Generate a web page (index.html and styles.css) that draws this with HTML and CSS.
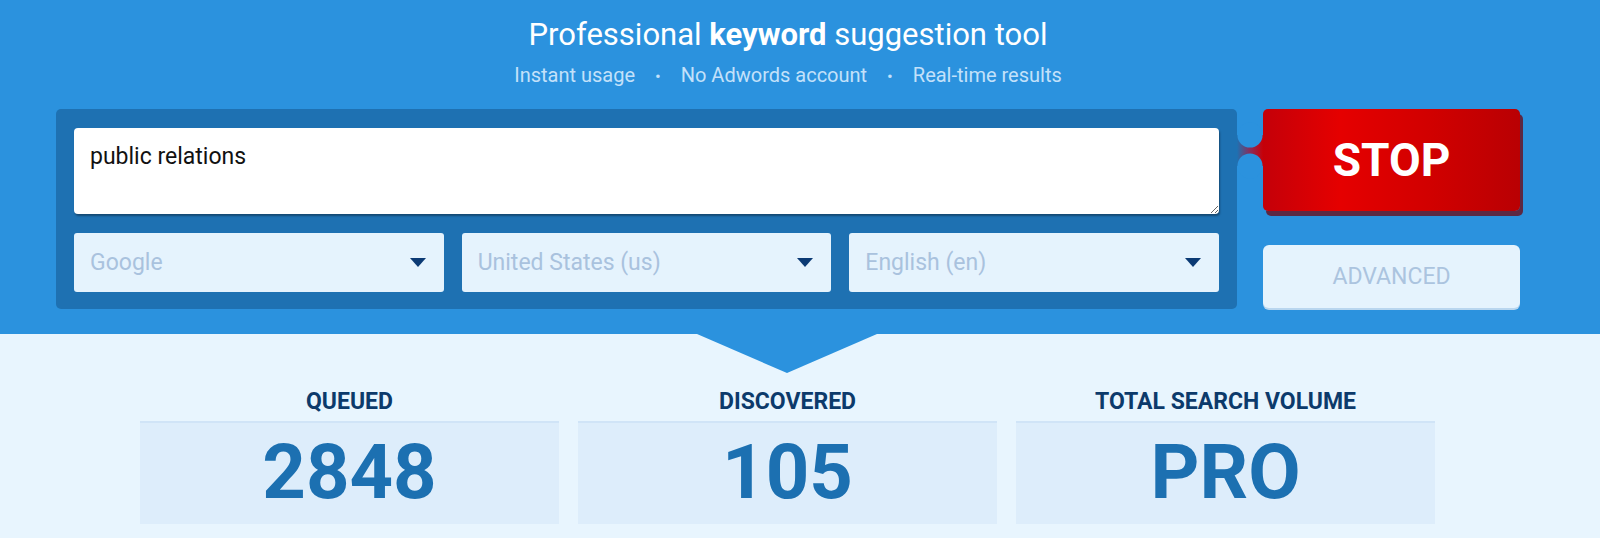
FILE: index.html
```
<!DOCTYPE html>
<html>
    <head>
        <title>Keyword Tool</title>
        <link rel="stylesheet" href="styles.css">
    </head>
    <body>
        <div id="top">
            <div class="wrap">
                <div class="intro">
                    <h1>Professional <b>keyword</b> suggestion tool</h1>
                    <p class="perks">
                        <span>Instant usage</span>
                        <span class="dot">&bull;</span>
                        <span>No Adwords account</span>
                        <span class="dot">&bull;</span>
                        <span>Real-time results</span>
                    </p>
                </div>

                <div class="search_row">
                    <!-- query box + the three pickers -->
                    <div class="search_panel">
                        <textarea id="query">public relations</textarea>
                        <div class="pickers">
                            <div class="picker">
                                <span>Google</span>
                                <svg width="16" height="9" viewBox="0 0 16 9"><path d="M0 0 H16 L8 9 Z" fill="#0b3a74"/></svg>
                            </div>
                            <div class="picker">
                                <span>United States (us)</span>
                                <svg width="16" height="9" viewBox="0 0 16 9"><path d="M0 0 H16 L8 9 Z" fill="#0b3a74"/></svg>
                            </div>
                            <div class="picker">
                                <span>English (en)</span>
                                <svg width="16" height="9" viewBox="0 0 16 9"><path d="M0 0 H16 L8 9 Z" fill="#0b3a74"/></svg>
                            </div>
                        </div>
                    </div>

                    <!-- little neck joining the panel to the button -->
                    <svg class="neck" width="26" height="82" viewBox="0 0 26 82">
                        <defs>
                            <linearGradient id="neck_fade" x1="0" x2="1" y1="0" y2="0">
                                <stop offset="0" stop-color="#1e71b2"/>
                                <stop offset="0.5" stop-color="#8a2c5a"/>
                                <stop offset="1" stop-color="#c70008"/>
                            </linearGradient>
                        </defs>
                        <rect x="0" y="26" width="26" height="31" fill="url(#neck_fade)"/>
                        <circle cx="13" cy="26" r="12.6" fill="#2b92de"/>
                        <circle cx="13" cy="57" r="12.6" fill="#2b92de"/>
                    </svg>

                    <div class="actions">
                        <button id="button_stop">STOP</button>
                        <button id="button_advanced">ADVANCED</button>
                    </div>
                </div>
            </div>
        </div>

        <div id="stats">
            <div class="wrap">
                <div class="stat_grid">
                    <div class="stat">
                        <h2>QUEUED</h2>
                        <div class="stat_value">2848</div>
                    </div>
                    <div class="stat">
                        <h2>DISCOVERED</h2>
                        <div class="stat_value">105</div>
                    </div>
                    <div class="stat">
                        <h2>TOTAL SEARCH VOLUME</h2>
                        <div class="stat_value">PRO</div>
                    </div>
                </div>
            </div>
        </div>
    </body>
</html>
```
FILE: styles.css
```
body {
    margin: 0;
    font-family: Roboto, "Liberation Sans", sans-serif;
    background-color: #e8f5fe;
}
.wrap {
    width: 1467px;
    margin-left: 56px;
}

#top {
    background-color: #2b92de;
    padding: 17px 0 25px;
    position: relative;
}
/* arrow pointing down at the counters */
#top::after {
    content: "";
    position: absolute;
    left: 697px;
    bottom: -39px;
    border-left: 90px solid transparent;
    border-right: 90px solid transparent;
    border-top: 39px solid #2b92de;
}

.intro {
    padding-right: 3px;
    text-align: center;
    color: #fff;
}
.intro h1 {
    margin: 0;
    font-size: 31px;
    font-weight: 400;
    line-height: 36px;
}
.intro b {
    font-weight: 700;
}
.perks {
    margin: 10px 0 0;
    font-size: 20px;
    line-height: 24px;
    color: #c3e1fa;
}
.perks .dot {
    margin: 0 15px;
    font-size: 17px;
}

.search_row {
    display: flex;
    align-items: flex-start;
    margin-top: 21px;
}
.search_panel {
    box-sizing: border-box;
    width: 1181px;
    padding: 19px 18px 17px;
    background-color: #1e71b2;
    border-radius: 5px;
    display: flex;
    flex-direction: column;
    gap: 19px;
}
#query {
    box-sizing: border-box;
    height: 86px;
    padding: 15px 16px;
    border: none;
    border-radius: 4px;
    background-color: #fff;
    box-shadow: 1px 2px 2px rgba(0, 0, 0, 0.35);
    font-family: Roboto, "Liberation Sans", sans-serif;
    font-size: 23px;
    color: #111;
    outline: none;
}
.pickers {
    display: grid;
    grid-template-columns: repeat(3, 1fr);
    gap: 18px;
}
.picker {
    height: 59px;
    box-sizing: border-box;
    padding: 0 18px 0 16px;
    background-color: #e5f3fd;
    border-radius: 3px;
    display: flex;
    align-items: center;
    justify-content: space-between;
    font-size: 23px;
    color: #a9c2de;
}

.neck {
    flex: none;
}

.actions {
    width: 257px;
    display: flex;
    flex-direction: column;
    gap: 34px;
}
#button_stop {
    height: 102px;
    border: none;
    border-radius: 5px;
    background: linear-gradient(90deg, #c40009 0%, #e50000 30%, #d10000 65%, #b90003 100%);
    box-shadow: 3px 5px 0 #5c2843;
    color: #fff;
    font-family: Roboto, "Liberation Sans", sans-serif;
    font-size: 46px;
    font-weight: 700;
    padding: 0;
}
#button_advanced {
    height: 63px;
    border: none;
    border-radius: 6px;
    background-color: #e5f3fd;
    box-shadow: 0 2px 0 #b9d6ef;
    color: #abc4df;
    font-family: Roboto, "Liberation Sans", sans-serif;
    font-size: 23px;
    padding: 0;
}

#stats {
    padding: 55px 0 14px;
}
.stat_grid {
    margin-left: 84px;
    width: 1295px;
    display: grid;
    grid-template-columns: repeat(3, 1fr);
    gap: 19px;
}
.stat h2 {
    margin: 0 0 6px;
    text-align: center;
    font-size: 23px;
    line-height: 26px;
    font-weight: 700;
    color: #0c3a6b;
}
.stat_value {
    background-color: #ddedfb;
    border-top: 2px solid #d0e4f7;
    padding: 9px 0 12px;
    text-align: center;
    font-size: 76px;
    line-height: 80px;
    font-weight: 700;
    color: #1c70b1;
}
```
